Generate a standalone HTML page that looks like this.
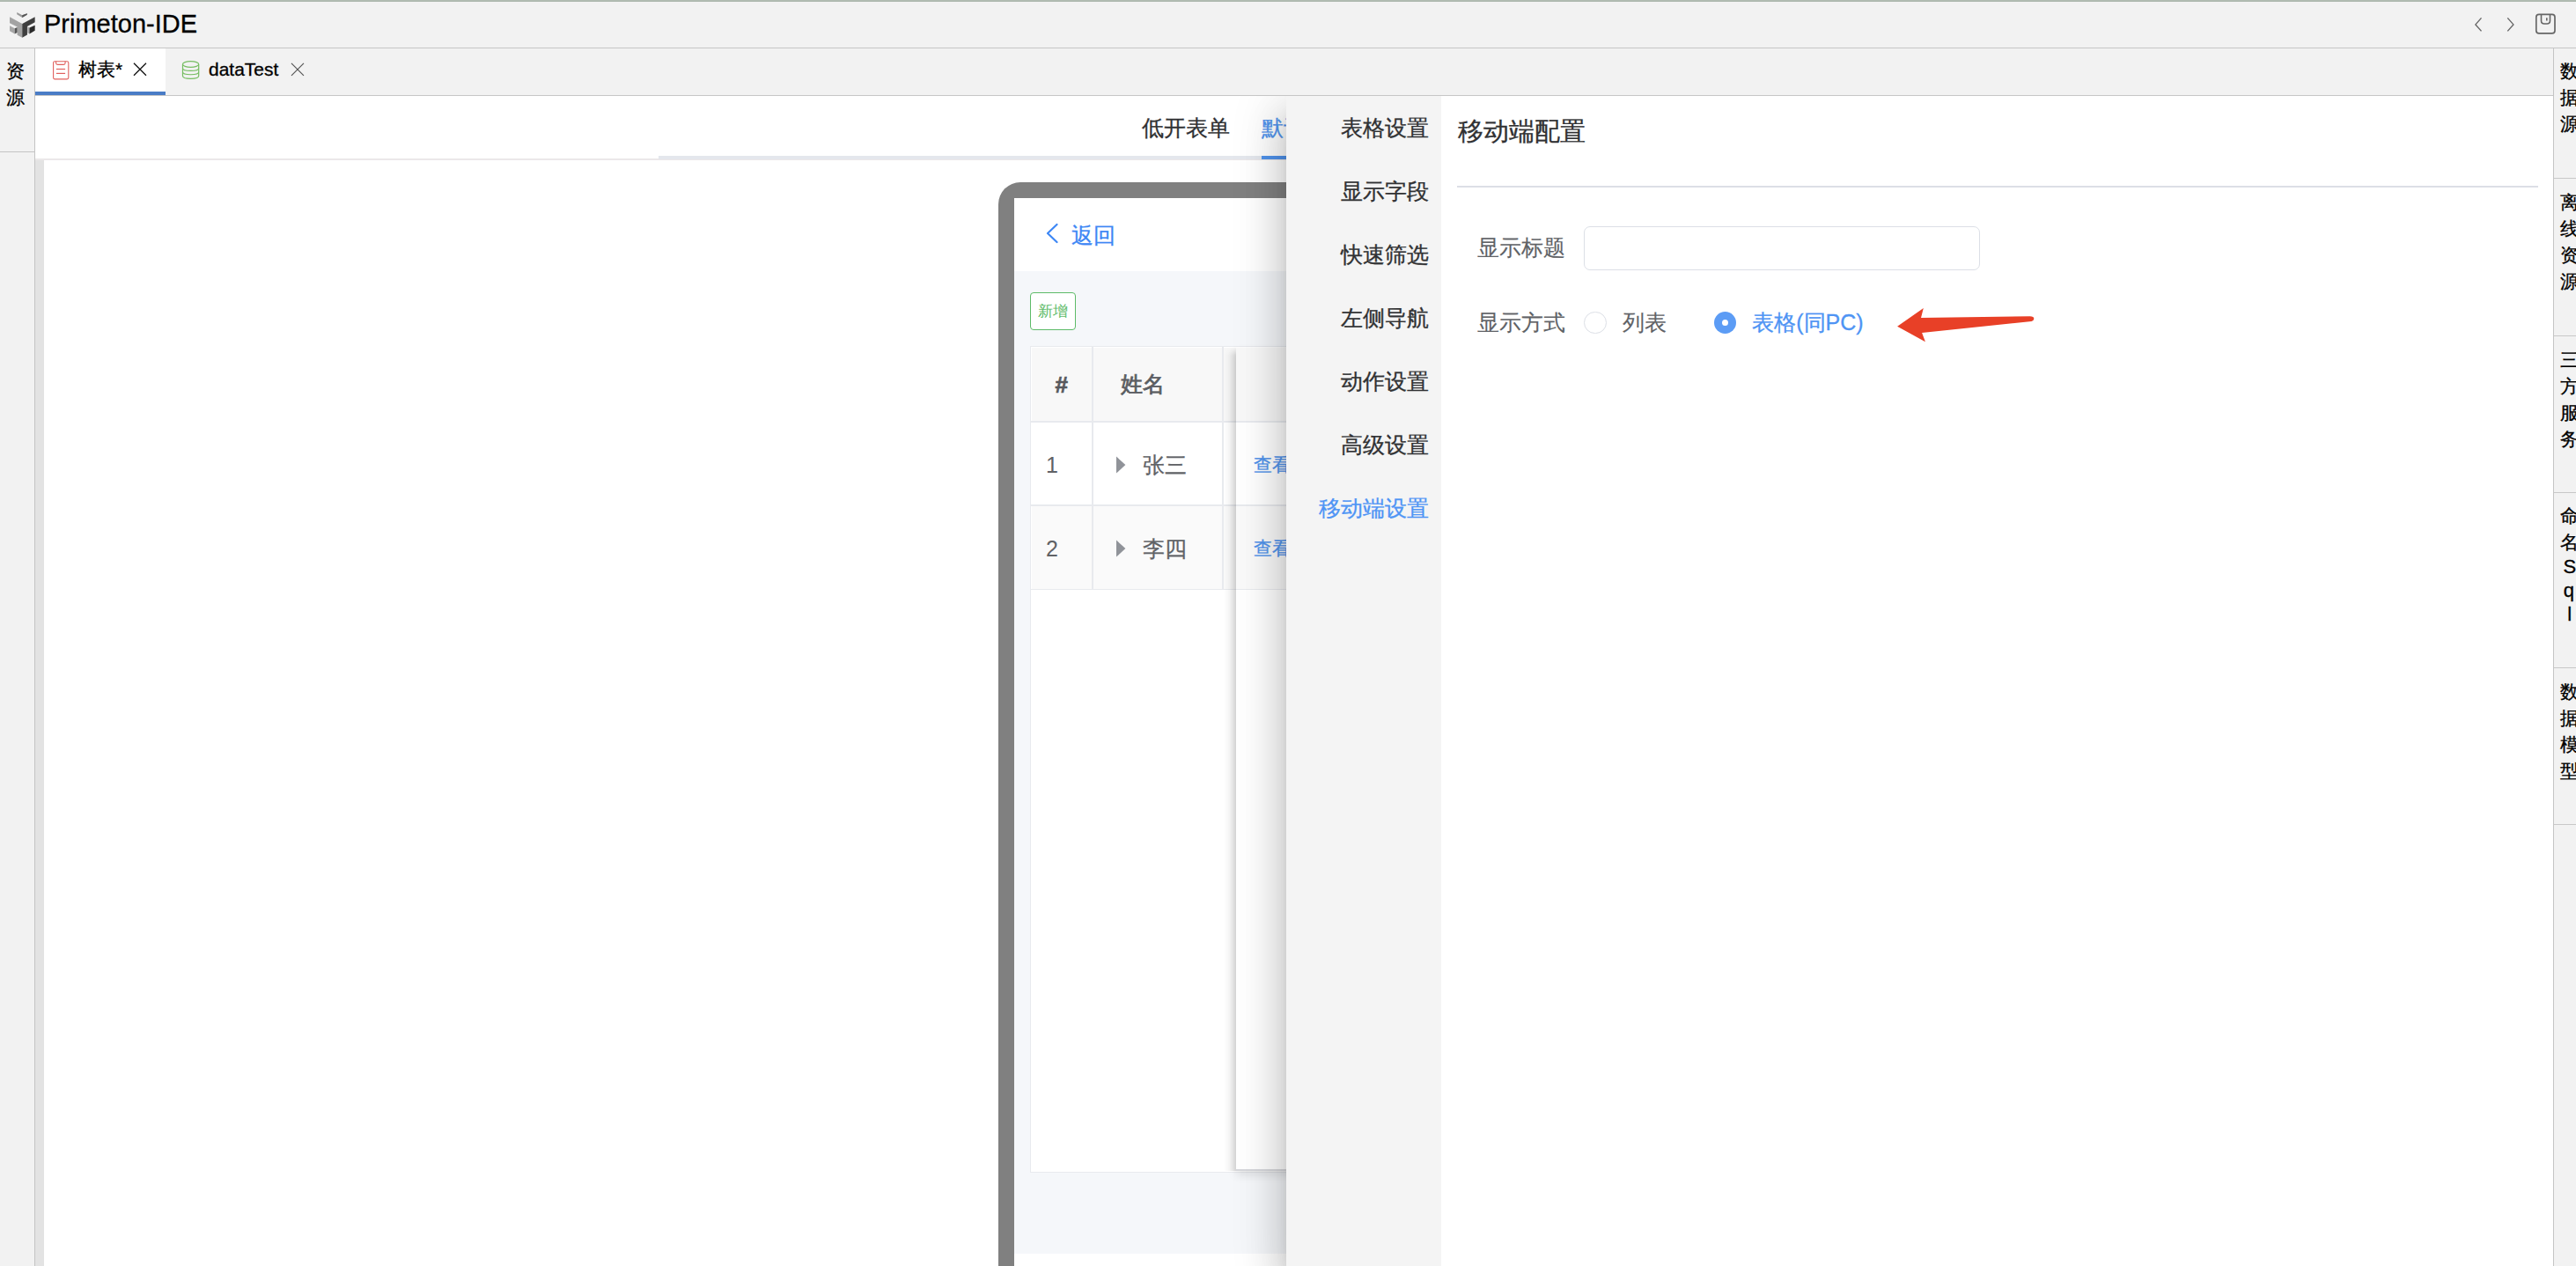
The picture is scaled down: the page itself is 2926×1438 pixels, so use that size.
<!DOCTYPE html>
<html><head><meta charset="utf-8">
<style>
*{margin:0;padding:0;box-sizing:border-box}
html,body{width:2926px;height:1438px;overflow:hidden;background:#fff;font-family:"Liberation Sans",sans-serif;position:relative;-webkit-text-stroke:0.3px currentColor}
.abs{position:absolute}
#topline{left:0;top:0;width:2926px;height:2px;background:linear-gradient(#b2bcb3 50%,#aab6ab 50%)}
#titlebar{left:0;top:2px;width:2926px;height:52px;background:#f2f2f2}
#titlesep{left:0;top:54px;width:2926px;height:1px;background:#c6c6c6}
#apptitle{left:50px;top:10px;font-size:29px;line-height:34px;color:#000}
#lside{left:0;top:55px;width:39px;height:1383px;background:#f2f2f2}
#lsideb{left:39px;top:55px;width:1px;height:1383px;background:#c4c4c4}
.vt{font-size:21px;line-height:30px;color:#000;text-align:center}
#rside{left:2901px;top:55px;width:25px;height:1383px;background:#f2f2f2}
#rsideb{left:2900px;top:55px;width:1px;height:1383px;background:#c4c4c4}
.rsep{left:2901px;width:25px;height:1px;background:#c8c8c8}
#tabbar{left:40px;top:55px;width:2860px;height:53px;background:#f2f2f2}
#tabsep{left:40px;top:108px;width:2860px;height:1px;background:#c6c6c6}
#acttab{left:40px;top:55px;width:148px;height:53px;background:#fff}
#actline{left:40px;top:104px;width:148px;height:4px;background:#4a7cc6}
.menu{left:1461px;width:162px;text-align:right;font-size:25px;line-height:72px;color:#303133;white-space:nowrap}
.tabtxt{font-size:21px;line-height:24px;color:#000}
</style></head><body>
<div class="abs" id="topline"></div>
<div class="abs" id="titlebar"></div>
<div class="abs" id="titlesep"></div>
<div class="abs" id="apptitle">Primeton-IDE</div>

<div class="abs" id="lside"></div>
<div class="abs" id="lsideb"></div>
<div class="abs vt" style="left:6.5px;top:66px;width:30px;text-align:left">资<br>源</div>
<div class="abs" style="left:0;top:172px;width:39px;height:1px;background:#c4c4c4"></div>


<!-- editor area -->
<div class="abs" id="ed" style="left:0;top:0;width:2926px;height:1438px;clip-path:inset(109px 26px 0 40px)">
  <div class="abs" style="left:1296.5px;top:132.5px;font-size:25px;line-height:25px;color:#303133;white-space:nowrap">低开表单</div>
  <div class="abs" style="left:1433px;top:133px;font-size:25px;line-height:25px;color:#5093ec;white-space:nowrap">默认列表</div>
  <div class="abs" style="left:40px;top:180px;width:2860px;height:2px;background:#ebe8e9"></div>
  <div class="abs" style="left:748px;top:177px;width:2152px;height:4px;background:#e4e7ed"></div>
  <div class="abs" style="left:1433px;top:177px;width:140px;height:4px;background:#5093ec"></div>
  <div class="abs" style="left:40px;top:182px;width:10px;height:1256px;background:#e3e3e3"></div>
  <!-- phone -->
  <div class="abs" style="left:1134px;top:207px;width:800px;height:1400px;border-radius:25px;background:#808080"></div>
  <div class="abs" style="left:1152px;top:225px;width:764px;height:1364px;background:#fff"></div>
  <div class="abs" style="left:1152px;top:308px;width:764px;height:1116px;background:#f5f7fa"></div>
  <svg class="abs" style="left:1180px;top:245px" width="30" height="40" viewBox="0 0 30 40">
    <polyline points="20.5,10 10,20 20.5,30" fill="none" stroke="#3d87f5" stroke-width="2.2" stroke-linecap="round" stroke-linejoin="round"/>
  </svg>
  <div class="abs" style="left:1217.3px;top:255.2px;font-size:25px;line-height:25px;color:#3d87f5;white-space:nowrap">返回</div>
  <div class="abs" style="left:1170px;top:332px;width:52px;height:43px;border:1.8px solid #5dbb68;border-radius:4px;background:#fff"></div>
  <div class="abs" style="left:1178.5px;top:345px;font-size:17.3px;line-height:17.3px;color:#5dbb68;white-space:nowrap;-webkit-text-stroke:0">新增</div>
  <!-- table -->
  <div class="abs" style="left:1170px;top:393px;width:700px;height:938.8px;background:#fff;border:1.8px solid #e8eaee"></div>
  <div class="abs" style="left:1171.8px;top:394.8px;width:700px;height:83.5px;background:#f8f8f8"></div>
  <div class="abs" style="left:1171.8px;top:575.1px;width:700px;height:93.7px;background:#fafafa"></div>
  <div class="abs" style="left:1170px;top:478px;width:700px;height:2px;background:#e8eaee"></div>
  <div class="abs" style="left:1170px;top:573.4px;width:700px;height:1.7px;background:#e8eaee"></div>
  <div class="abs" style="left:1170px;top:668.8px;width:700px;height:1.7px;background:#e8eaee"></div>
  <div class="abs" style="left:1240px;top:393px;width:1.8px;height:277px;background:#e8eaee"></div>
  <div class="abs" style="left:1388px;top:393px;width:1.8px;height:277px;background:#e8eaee"></div>
  <div class="abs" style="left:1198.5px;top:424px;font-size:26px;line-height:26px;font-weight:bold;color:#57595e;-webkit-text-stroke:0.7px #57595e">#</div>
  <div class="abs" style="left:1273px;top:424.3px;font-size:25px;line-height:25px;color:#5b5d62;white-space:nowrap;-webkit-text-stroke:0.75px #5b5d62">姓名</div>
  <div class="abs" style="left:1188px;top:515.7px;font-size:25px;line-height:25px;color:#606266;-webkit-text-stroke:0">1</div>
  <svg class="abs" style="left:1260px;top:515px" width="30" height="30" viewBox="0 0 30 30"><polygon points="8,3.6 18.4,13 8,22.6" fill="#909399"/></svg>
  <div class="abs" style="left:1297.8px;top:516.3px;font-size:25px;line-height:25px;color:#606266;white-space:nowrap">张三</div>
  <div class="abs" style="left:1188px;top:610.7px;font-size:25px;line-height:25px;color:#606266;-webkit-text-stroke:0">2</div>
  <svg class="abs" style="left:1260px;top:610px" width="30" height="30" viewBox="0 0 30 30"><polygon points="8,3.6 18.4,13 8,22.6" fill="#909399"/></svg>
  <div class="abs" style="left:1297.8px;top:611.3px;font-size:25px;line-height:25px;color:#606266;white-space:nowrap">李四</div>
  <!-- fixed right column -->
  <div class="abs" style="left:1390px;top:394px;width:14px;height:936px;background:linear-gradient(to right,rgba(0,0,0,0),rgba(0,0,0,.03) 40%,rgba(0,0,0,.12));-webkit-mask-image:linear-gradient(to bottom,transparent,#000 10px)"></div>
  <div class="abs" style="left:1404px;top:394.8px;width:300px;height:935px;background:#fff;box-shadow:0 5px 10px rgba(0,0,0,.1)"></div>
  <div class="abs" style="left:1404px;top:394.8px;width:300px;height:83.5px;background:#f8f8f8"></div>
  <div class="abs" style="left:1404px;top:575.1px;width:300px;height:93.7px;background:#fafafa"></div>
  <div class="abs" style="left:1404px;top:478px;width:300px;height:2px;background:#e8eaee"></div>
  <div class="abs" style="left:1404px;top:573.4px;width:300px;height:1.7px;background:#e8eaee"></div>
  <div class="abs" style="left:1404px;top:668.8px;width:300px;height:1.7px;background:#e8eaee"></div>
  <div class="abs" style="left:1404px;top:1328.3px;width:300px;height:1.8px;background:#d6d7db"></div>
  <div class="abs" style="left:1423.5px;top:516.6px;font-size:21px;line-height:21px;color:#5093ec;white-space:nowrap">查看</div>
  <div class="abs" style="left:1423.5px;top:611.5px;font-size:21px;line-height:21px;color:#5093ec;white-space:nowrap">查看</div>
  <div class="abs" style="left:1152px;top:1424px;width:764px;height:40px;background:#fff"></div>

  <!-- drawer -->
  <div class="abs" id="drawer" style="left:1461px;top:109px;width:1439px;height:1329px;background:#fff;box-shadow:0 14px 18px -9px rgba(0,0,0,.2),0 29px 43px 4px rgba(0,0,0,.14),0 11px 54px 9px rgba(0,0,0,.12)"></div>
  <div class="abs" style="left:1461px;top:109px;width:176px;height:1329px;background:#f4f4f4"></div>
  <div class="abs menu" style="top:109px">表格设置</div>
  <div class="abs menu" style="top:181px">显示字段</div>
  <div class="abs menu" style="top:253px">快速筛选</div>
  <div class="abs menu" style="top:325px">左侧导航</div>
  <div class="abs menu" style="top:397px">动作设置</div>
  <div class="abs menu" style="top:469px">高级设置</div>
  <div class="abs menu" style="top:541px;color:#4e94f4">移动端设置</div>
  <div class="abs" style="left:1655.7px;top:134.5px;font-size:28.5px;line-height:28.5px;color:#303133;white-space:nowrap">移动端配置</div>
  <div class="abs" style="left:1655px;top:211px;width:1228px;height:2px;background:#dcdfe6"></div>
  <div class="abs" style="left:1678px;top:269.3px;font-size:25px;line-height:25px;color:#606266;white-space:nowrap;-webkit-text-stroke:0.15px #606266">显示标题</div>
  <div class="abs" style="left:1799px;top:257px;width:450px;height:50px;border:1.8px solid #dcdfe6;border-radius:7px;background:#fff"></div>
  <div class="abs" style="left:1678px;top:353.8px;font-size:25px;line-height:25px;color:#606266;white-space:nowrap;-webkit-text-stroke:0.15px #606266">显示方式</div>
  <div class="abs" style="left:1799px;top:353.7px;width:25.5px;height:25.5px;border:1.8px solid #dcdfe6;border-radius:50%;background:#fff"></div>
  <div class="abs" style="left:1842.7px;top:353.8px;font-size:25px;line-height:25px;color:#606266;white-space:nowrap;-webkit-text-stroke:0.15px #606266">列表</div>
  <div class="abs" style="left:1947px;top:354px;width:25.2px;height:25.2px;border-radius:50%;background:#5c9cf5"></div>
  <div class="abs" style="left:1955.8px;top:362.8px;width:7.6px;height:7.6px;border-radius:50%;background:#fff"></div>
  <div class="abs" style="left:1990.2px;top:353.8px;font-size:25px;line-height:25px;color:#4e94f4;white-space:nowrap">表格(同PC)</div>
  <svg class="abs" style="left:2140px;top:340px" width="190" height="60" viewBox="0 0 190 60">
    <path d="M15.1,30.7 L44.8,10.1 L42,21 L165.7,19.2 Q170.5,19.3 170.3,22.2 Q170,24.5 167.5,24.9 L43.1,38.1 L46.9,48.2 Z" fill="#e84027"/>
  </svg>
</div>

<div class="abs" id="rside"></div>
<div class="abs" id="rsideb"></div>

<div class="abs" id="tabbar"></div>
<div class="abs" id="tabsep"></div>
<div class="abs" id="acttab"></div>
<div class="abs" id="actline"></div>
<div class="abs tabtxt" style="left:89px;top:67px">树表*</div>
<div class="abs tabtxt" style="left:237px;top:67px">dataTest</div>


<!-- logo -->
<svg class="abs" style="left:5px;top:5px" width="45" height="45" viewBox="0 0 1266 1266">
<polygon points="400,255 570,345 725,290 725,330 570,420 400,320" fill="#9a9a9a"/>
<polygon points="570,345 725,290 725,330 570,420" fill="#555"/>
<polygon points="170,400 570,620 570,1060 410,980 410,720 170,600" fill="#a3a3a3"/>
<polygon points="570,620 975,400 975,570 730,700 730,970 570,1060" fill="#3e3e3e"/>
<polygon points="170,680 330,770 330,940 170,850" fill="#a6a6a6"/>
<polygon points="330,770 410,730 410,900 330,940" fill="#555"/>
<polygon points="740,710 800,745 800,940 740,910" fill="#a6a6a6"/>
<polygon points="800,745 975,670 975,840 800,940" fill="#2a2a2a"/>
</svg>
<!-- title right icons -->
<svg class="abs" style="left:2800px;top:8px" width="112" height="40" viewBox="0 0 112 40">
<polyline points="18.5,12.4 11.9,19.9 18.5,27.4" fill="none" stroke="#666" stroke-width="1.4"/>
<polyline points="48.3,12.4 54.9,19.9 48.3,27.4" fill="none" stroke="#666" stroke-width="1.4"/>
<rect x="80.8" y="8.4" width="21.2" height="21.5" rx="3.2" fill="none" stroke="#666" stroke-width="1.7"/>
<path d="M86.5,8.4 V15.5 Q86.5,19 90,19 H93 Q96.5,19 96.5,15.5 V8.4" fill="none" stroke="#666" stroke-width="1.6"/>
<line x1="92.8" y1="12.2" x2="92.8" y2="15.6" stroke="#666" stroke-width="1.6"/>
</svg>
<!-- tab icons -->
<svg class="abs" style="left:55px;top:62px" width="30" height="34" viewBox="0 0 30 34">
<rect x="5.6" y="7.7" width="17.2" height="20.2" rx="1.6" fill="none" stroke="#e0605e" stroke-width="1.1"/>
<path d="M8.6,7.7 V9.6 Q8.6,11.4 10.4,11.4 H17.3 Q19.1,11.4 19.1,9.6 V7.7" fill="none" stroke="#e0605e" stroke-width="1.1"/>
<line x1="8.9" y1="16.5" x2="19.1" y2="16.5" stroke="#e0605e" stroke-width="1.2"/>
<line x1="8.9" y1="21.4" x2="19.1" y2="21.4" stroke="#e0605e" stroke-width="1.2"/>
</svg>
<svg class="abs" style="left:150px;top:70px" width="18" height="18" viewBox="0 0 18 18">
<path d="M2,1.8 L16,15.8 M16,1.8 L2,15.8" stroke="#111" stroke-width="1.3"/>
</svg>
<svg class="abs" style="left:204px;top:66px" width="26" height="28" viewBox="0 0 26 28">
<ellipse cx="12.6" cy="7" rx="9.1" ry="3.3" fill="none" stroke="#76bd62" stroke-width="1.2"/>
<path d="M3.5,7 V20.2 Q3.5,23.3 12.6,23.3 Q21.7,23.3 21.7,20.2 V7" fill="none" stroke="#76bd62" stroke-width="1.2"/>
<path d="M3.5,11.4 Q3.5,14.4 12.6,14.4 Q21.7,14.4 21.7,11.4" fill="none" stroke="#76bd62" stroke-width="1.1"/>
<path d="M3.5,15.7 Q3.5,18.7 12.6,18.7 Q21.7,18.7 21.7,15.7" fill="none" stroke="#76bd62" stroke-width="1.1"/>
</svg>
<svg class="abs" style="left:329px;top:70px" width="18" height="18" viewBox="0 0 18 18">
<path d="M2,1.8 L16,15.8 M16,1.8 L2,15.8" stroke="#555" stroke-width="1.2"/>
</svg>
<!-- right sidebar -->
<div class="abs vt" style="left:2907.5px;top:66px;width:30px;text-align:left">数<br>据<br>源</div>
<div class="abs rsep" style="top:202px"></div>
<div class="abs vt" style="left:2907.5px;top:214.5px;width:30px;text-align:left">离<br>线<br>资<br>源</div>
<div class="abs rsep" style="top:381px"></div>
<div class="abs vt" style="left:2907.5px;top:393.5px;width:30px;text-align:left">三<br>方<br>服<br>务</div>
<div class="abs rsep" style="top:559px"></div>
<div class="abs vt" style="left:2907.5px;top:571px;width:30px;text-align:left">命<br>名</div>
<div class="abs" style="left:2911.5px;top:633.2px;font-size:22px;line-height:22px;color:#000">S</div>
<div class="abs" style="left:2911.7px;top:659.8px;font-size:22px;line-height:22px;color:#000">q</div>
<div class="abs" style="left:2916.2px;top:687.1px;font-size:22px;line-height:22px;color:#000">l</div>
<div class="abs rsep" style="top:758px"></div>
<div class="abs vt" style="left:2907.5px;top:770.5px;width:30px;text-align:left">数<br>据<br>模<br>型</div>
<div class="abs rsep" style="top:936px"></div>
</body></html>
